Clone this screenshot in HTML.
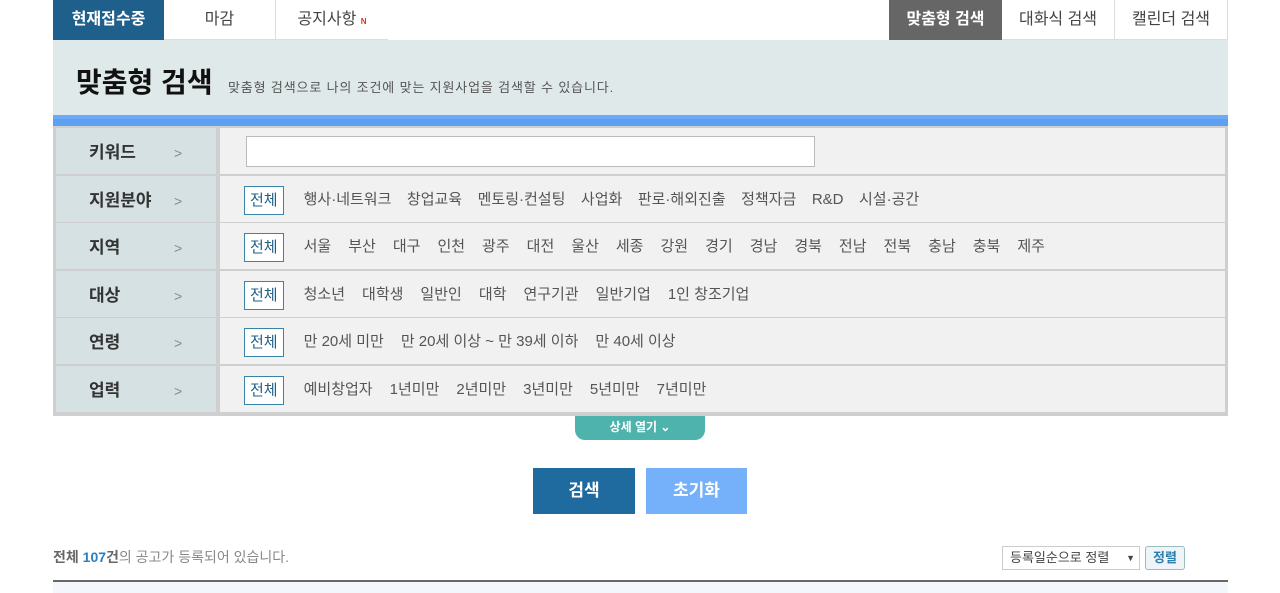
<!DOCTYPE html>
<html><head><meta charset="utf-8"><style>
*{margin:0;padding:0;box-sizing:border-box}
body{width:1280px;height:593px;overflow:hidden;background:#fff;font-family:"Liberation Sans","Noto Sans CJK KR",sans-serif;position:relative;color:#333}
.a{position:absolute}
.tab{position:absolute;top:0;height:40px;line-height:40px;text-align:center;font-size:16px;color:#444;background:#fff;border-right:1px solid #ddd;border-bottom:1px solid #ddd}
.row{position:absolute;left:56px;width:1169px;height:46px}
.lab{position:absolute;left:0;top:0;width:160px;height:46px;background:#d6e1e3;font-size:17px;font-weight:bold;color:#333;line-height:50px;padding-left:33px}
.lab span{position:absolute;left:118px;color:#888;font-weight:normal;font-size:14px}
.val{position:absolute;left:164px;top:0;width:1005px;height:46px;background:#f1f1f1;font-size:15px;color:#555;line-height:48px;padding-left:24px;white-space:nowrap}
.all{display:inline-block;border:1px solid #3a83a8;background:#fff;color:#1f5f87;height:29px;line-height:27px;padding:0 5px;margin-right:20px;vertical-align:middle}
.val i{font-style:normal;margin-right:17px}
.val.n i{margin-right:15.5px}
</style></head><body>
<div class="tab" style="left:53px;width:111px;background:#1f5f8b;color:#fff;font-weight:bold;border:none">현재접수중</div>
<div class="tab" style="left:164px;width:112px">마감</div>
<div class="tab" style="left:276px;width:112px;border-right:none">공지사항 <span style="color:#e0301e;font-size:8px;font-weight:bold">N</span></div>
<div class="tab" style="left:889px;width:113px;background:#666;color:#fff;font-weight:bold;border:none">맞춤형 검색</div>
<div class="tab" style="left:1002px;width:113px">대화식 검색</div>
<div class="tab" style="left:1115px;width:113px">캘린더 검색</div>
<div class="a" style="left:53px;top:40px;width:1175px;height:75px;background:#e0e9ea"></div>
<div class="a" style="left:76px;top:61px;font-size:28px;font-weight:bold;color:#111">맞춤형 검색</div>
<div class="a" style="left:228px;top:77px;font-size:13px;color:#555;letter-spacing:0.85px">맞춤형 검색으로 나의 조건에 맞는 지원사업을 검색할 수 있습니다.</div>
<div class="a" style="left:53px;top:115px;width:1175px;height:11px;background:#5d9ff0;border-top:4px solid #6aaaf8"></div>
<div class="a" style="left:53px;top:126px;width:1175px;height:290px;background:#cfcfcf"></div>
<div class="row" style="top:128px"><div class="lab">키워드<span>&gt;</span></div><div class="val"><div class="a" style="left:26px;top:8px;width:569px;height:31px;background:#fff;border:1px solid #bbb"></div></div></div>
<div class="row" style="top:176px"><div class="lab">지원분야<span>&gt;</span></div><div class="val n"><span class="all">전체</span><i>행사·네트워크</i><i>창업교육</i><i>멘토링·컨설팅</i><i>사업화</i><i>판로·해외진출</i><i>정책자금</i><i>R&amp;D</i><i>시설·공간</i></div></div>
<div class="row" style="top:223px"><div class="lab">지역<span>&gt;</span></div><div class="val"><span class="all">전체</span><i>서울</i><i>부산</i><i>대구</i><i>인천</i><i>광주</i><i>대전</i><i>울산</i><i>세종</i><i>강원</i><i>경기</i><i>경남</i><i>경북</i><i>전남</i><i>전북</i><i>충남</i><i>충북</i><i>제주</i></div></div>
<div class="row" style="top:271px"><div class="lab">대상<span>&gt;</span></div><div class="val"><span class="all">전체</span><i>청소년</i><i>대학생</i><i>일반인</i><i>대학</i><i>연구기관</i><i>일반기업</i><i>1인 창조기업</i></div></div>
<div class="row" style="top:318px"><div class="lab">연령<span>&gt;</span></div><div class="val"><span class="all">전체</span><i>만 20세 미만</i><i>만 20세 이상 ~ 만 39세 이하</i><i>만 40세 이상</i></div></div>
<div class="row" style="top:366px"><div class="lab">업력<span>&gt;</span></div><div class="val"><span class="all">전체</span><i>예비창업자</i><i>1년미만</i><i>2년미만</i><i>3년미만</i><i>5년미만</i><i>7년미만</i></div></div>
<div class="a" style="left:575px;top:416px;width:130px;height:24px;background:#4fb3ad;border-radius:0 0 10px 10px;color:#fff;font-size:12px;font-weight:bold;text-align:center;line-height:22px">상세 열기 ⌄</div>
<div class="a" style="left:533px;top:468px;width:102px;height:46px;background:#1f6a9f;color:#fff;font-size:17px;font-weight:bold;text-align:center;line-height:46px">검색</div>
<div class="a" style="left:646px;top:468px;width:101px;height:46px;background:#75b0fb;color:#fff;font-size:17px;font-weight:bold;text-align:center;line-height:46px">초기화</div>
<div class="a" style="left:53px;top:547px;font-size:14px;color:#888"><b style="color:#666">전체 </b><b style="color:#2a7fc0">107</b><b style="color:#666">건</b>의 공고가 등록되어 있습니다.</div>
<div class="a" style="left:1002px;top:546px;width:138px;height:24px;border:1px solid #ccc;font-size:13px;color:#444;line-height:22px;padding-left:7px">등록일순으로 정렬 <span style="position:absolute;right:4px;font-size:9px">▼</span></div>
<div class="a" style="left:1145px;top:546px;width:40px;height:24px;border:1px solid #9bb;border-radius:3px;background:#eef4f7;font-size:13px;font-weight:bold;color:#2a7fb0;text-align:center;line-height:22px">정렬</div>
<div class="a" style="left:53px;top:580px;width:1175px;height:2px;background:#666"></div>
<div class="a" style="left:53px;top:582px;width:1175px;height:11px;background:#f3f7fb"></div>
</body></html>
